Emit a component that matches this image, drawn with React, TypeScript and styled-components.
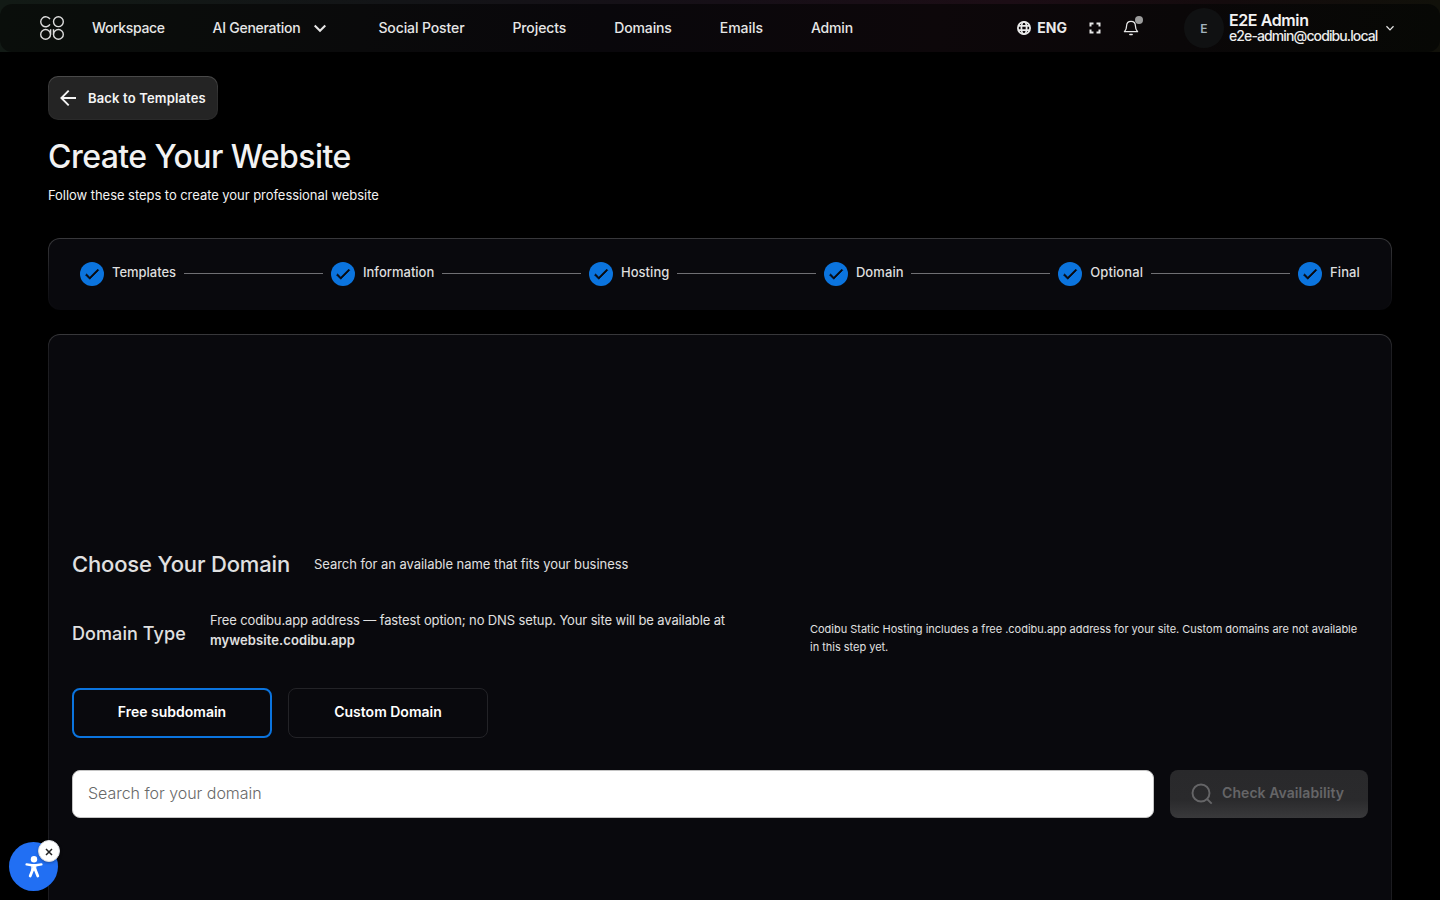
import React from 'react';
import styled, { createGlobalStyle } from 'styled-components';

const GlobalStyle = createGlobalStyle`
  *, *::before, *::after { box-sizing: border-box; }
  body {
    margin: 0;
    background: #000;
    color: #ededed;
    font-family: Inter, "Liberation Sans", sans-serif;
    overflow: hidden;
  }
  h1, h2, h3, p { margin: 0; font-weight: 400; }
  button, input { font-family: inherit; margin: 0; }
`;

interface Tracked { $track?: number }

const Page = styled.div`
  height: 900px;
  overflow: hidden;
`;

const TopStrip = styled.div`
  padding-top: 4px;
  background: linear-gradient(90deg, #121a15 0%, #131417 28%, #160f17 50%, #1c0d15 70%, #140b0d 85%, #11110a 100%);
`;

const Header = styled.header`
  height: 48px;
  padding: 0 44px 0 40px;
  display: flex;
  align-items: center;
  border-radius: 12px;
  background: linear-gradient(90deg, #0a0e0b 0%, #0a0a0b 25%, #09070b 42%, #0d070a 65%, #0a0708 82%, #070805 100%);
`;

const Nav = styled.nav`
  display: flex;
  align-items: center;
  gap: 48px;
  margin-left: 28px;
`;

const NavLink = styled.a<Tracked>`
  display: flex;
  align-items: center;
  gap: 11px;
  font-size: 14px;
  font-weight: 500;
  line-height: 20px;
  white-space: nowrap;
  color: #e6e6e6;
  letter-spacing: ${({ $track = 0 }) => $track}px;
  svg { margin-right: 1px; }
`;

const HeaderTools = styled.div`
  display: flex;
  align-items: center;
  margin-left: auto;
  color: #e8e8e8;
`;

const Language = styled.div`
  display: flex;
  align-items: center;
  gap: 6px;
  font-size: 14px;
  font-weight: 700;
  line-height: 20px;
`;

const FullscreenButton = styled.span`
  display: flex;
  margin-left: 22px;
`;

const BellButton = styled.span`
  position: relative;
  display: flex;
  margin-left: 22px;
`;

const BellDot = styled.span`
  position: absolute;
  top: -4px;
  right: -4px;
  width: 8px;
  height: 8px;
  border-radius: 50%;
  background: #9b9b9b;
`;

const Avatar = styled.span`
  width: 40px;
  height: 40px;
  margin-left: 45px;
  display: flex;
  align-items: center;
  justify-content: center;
  border-radius: 50%;
  background: #101112;
  color: #a3b3bd;
  font-size: 12px;
  font-weight: 600;
`;

const Account = styled.div`
  width: 149px;
  margin: 0 6px 0 5px;
  white-space: nowrap;
`;

const AccountName = styled.div`
  font-size: 16px;
  font-weight: 600;
  line-height: 16px;
  letter-spacing: -0.4px;
  color: #f2f2f2;
`;

const AccountMail = styled.div`
  font-size: 14px;
  font-weight: 500;
  line-height: 16px;
  letter-spacing: -0.89px;
  color: #ececec;
`;

const Main = styled.main`
  padding: 24px 48px 0;
`;

const BackButton = styled.button`
  display: flex;
  align-items: center;
  gap: 12px;
  width: 170px;
  height: 44px;
  padding: 0 0 0 11px;
  border: 1px solid transparent;
  border-radius: 10px;
  background:
    linear-gradient(#242424, #242424) padding-box,
    linear-gradient(#4a4a4a, #303030 40%, #2a2a2a) border-box;
  color: #f4f4f4;
  font-size: 13px;
  font-weight: 600;
  letter-spacing: 0.16px;
  white-space: nowrap;
`;

const Title = styled.h1`
  margin-top: 17px;
  font-size: 32px;
  font-weight: 500;
  line-height: 40px;
  letter-spacing: -0.55px;
  color: #f2f2f2;
`;

const Subtitle = styled.p`
  margin-top: 8px;
  font-size: 13px;
  line-height: 20px;
  letter-spacing: -0.05px;
  color: #f2f2f2;
`;

const Card = styled.section`
  border: 1px solid transparent;
  border-radius: 12px;
  background:
    linear-gradient(#09090d, #09090d) padding-box,
    linear-gradient(#38383b, #1d1d21 16px, #1b1b1f) border-box;
`;

const StepsCard = styled(Card)`
  height: 72px;
  margin-top: 33px;
  padding: 0 31px;
  display: flex;
  align-items: center;
  gap: 8px;
  background:
    linear-gradient(#09090d, #09090d) padding-box,
    linear-gradient(#38383b, #1d1d21 50%, #09090d) border-box;
`;

const StepBadge = styled.span`
  width: 24px;
  height: 24px;
  flex: none;
  display: flex;
  align-items: center;
  justify-content: center;
  border-radius: 50%;
  background: #0b74de;
`;

const StepLabel = styled.span<{ $width: number } & Tracked>`
  width: ${({ $width }) => $width}px;
  flex: none;
  margin-top: -4px;
  font-size: 13px;
  font-weight: 500;
  line-height: 20px;
  white-space: nowrap;
  color: #dedede;
  letter-spacing: ${({ $track = 0 }) => $track}px;
`;

const StepLine = styled.span`
  flex: 1;
  height: 1px;
  margin-top: -1px;
  background: #6f6f73;
`;

const DomainCard = styled(Card)`
  height: 640px;
  margin-top: 24px;
  padding: 214px 23px 0;
`;

const HeadingRow = styled.div`
  display: flex;
  align-items: center;
  gap: 24px;
`;

const Heading = styled.h2`
  width: 218px;
  font-size: 22px;
  font-weight: 500;
  line-height: 30px;
  letter-spacing: -0.16px;
  white-space: nowrap;
  color: #e0e0e0;
`;

const Body = styled.p<Tracked>`
  font-size: 13px;
  line-height: 20px;
  color: #e0e0e0;
  letter-spacing: ${({ $track = 0 }) => $track}px;
`;

const Address = styled.strong`
  font-weight: 600;
  letter-spacing: 0.08px;
`;

const TypeRow = styled.div`
  display: grid;
  grid-template-columns: 114px 576px 1fr;
  column-gap: 24px;
  align-items: center;
  margin-top: 25px;
`;

const TypeHeading = styled.h3`
  padding-top: 7px;
  font-size: 18px;
  font-weight: 500;
  line-height: 26px;
  letter-spacing: 0.08px;
  white-space: nowrap;
  color: #e0e0e0;
`;

const Note = styled.p`
  padding-top: 16px;
  font-size: 11px;
  line-height: 18px;
  letter-spacing: -0.02px;
  color: #e0e0e0;
`;

const ChoiceRow = styled.div`
  display: flex;
  gap: 16px;
  margin-top: 32px;
`;

const Choice = styled.button<{ $active?: boolean }>`
  width: 200px;
  height: 50px;
  padding: 0 0 3px;
  border: ${({ $active }) => ($active ? '2px solid #0b74de' : '1px solid #232327')};
  border-radius: 8px;
  background: transparent;
  color: #fff;
  font-size: 14px;
  font-weight: 600;
`;

const SearchRow = styled.div`
  display: flex;
  gap: 16px;
  margin-top: 32px;
`;

const SearchInput = styled.input`
  flex: 1;
  height: 48px;
  padding: 0 15px 2px;
  border: 1px solid #c4c4c4;
  border-radius: 8px;
  background: #fff;
  font-size: 16px;
  font-weight: 300;
  letter-spacing: -0.03px;
  &::placeholder { color: #686868; opacity: 1; }
`;

const CheckButton = styled.button`
  width: 198px;
  height: 48px;
  padding: 0 0 0 20px;
  display: flex;
  align-items: center;
  gap: 8px;
  border: 0;
  border-radius: 8px;
  background: linear-gradient(#29292b 0%, #2a2a2c 62%, #39393b 100%);
  color: #656567;
  font-size: 14px;
  font-weight: 600;
  letter-spacing: 0.07px;
  white-space: nowrap;
`;

const CheckLabel = styled.span`
  padding-bottom: 3px;
`;

const AccessibilityButton = styled.div`
  position: fixed;
  left: 9px;
  top: 842px;
  width: 49px;
  height: 49px;
  display: flex;
  align-items: center;
  justify-content: center;
  border-radius: 50%;
  background: #216ff3;
`;

const DismissBadge = styled.span`
  position: absolute;
  top: -2px;
  left: 29px;
  width: 22px;
  height: 22px;
  padding-top: 2px;
  display: flex;
  align-items: center;
  justify-content: center;
  border-radius: 50%;
  border: 1px solid #d9dbe0;
  background: #fff;
  box-shadow: 0 1px 3px rgba(0, 0, 0, 0.3);
`;

const Logo = () => (
  <svg width="24" height="24" viewBox="0 0 24 24" fill="none" stroke="#dcdcdc" strokeWidth="1.4">
    <path d="M10 3.2A5 5 0 1 0 10 8.4" />
    <circle cx="18.4" cy="5.7" r="4.9" />
    <circle cx="5.6" cy="18.4" r="4.9" />
    <path d="M10.6 13.2v5.2" />
    <circle cx="18.4" cy="18.4" r="4.9" />
    <path d="M13.5 13.2v5.2" />
  </svg>
);

const Chevron = ({ size, weight }: { size: number; weight: number }) => (
  <svg width={size} height={size} viewBox="0 0 16 16" fill="none" stroke="currentColor" strokeWidth={weight}>
    <path d="M3.3 5.7l4.7 4.7 4.7-4.7" />
  </svg>
);

const Globe = () => (
  <svg width="14" height="14" viewBox="0 0 14 14" fill="none" stroke="currentColor" strokeWidth="1.8">
    <circle cx="7" cy="7" r="6.1" />
    <ellipse cx="7" cy="7" rx="2.6" ry="6.1" />
    <path d="M1.2 4.8h11.6M1.2 9.2h11.6" />
  </svg>
);

const Fullscreen = () => (
  <svg width="12" height="12" viewBox="0 0 12 12" fill="none" stroke="currentColor" strokeWidth="2">
    <path d="M1.5 4.5v-3h3M7.5 1.5h3v3M10.5 7.5v3h-3M4.5 10.5h-3v-3" />
  </svg>
);

const Bell = () => (
  <svg width="16" height="16" viewBox="0 0 16 16" fill="none" stroke="currentColor" strokeWidth="1.25" strokeLinecap="round" strokeLinejoin="round">
    <path d="M8 1.3c-2.7 0-4.4 2-4.4 4.5 0 3.4-1 4.4-2.2 5.9h13.2c-1.2-1.5-2.2-2.5-2.2-5.9C12.4 3.3 10.7 1.3 8 1.3z" />
    <path d="M6.9 14.5h2.2" strokeWidth="1.5" />
  </svg>
);

const ArrowLeft = () => (
  <svg width="16" height="16" viewBox="0 0 16 16" fill="none" stroke="currentColor" strokeWidth="1.9">
    <path d="M16 8H1.5M8.7 0.7L1.4 8l7.3 7.3" />
  </svg>
);

const Check = () => (
  <svg width="18" height="18" viewBox="0 0 24 24" fill="#09090d" stroke="#09090d" strokeWidth="0.9">
    <path d="M9 16.17L4.83 12l-1.42 1.41L9 19 21 7l-1.41-1.41z" />
  </svg>
);

const Magnifier = () => (
  <svg width="24" height="24" viewBox="0 0 24 24" fill="none" stroke="currentColor" strokeWidth="1.9">
    <circle cx="11" cy="11" r="8.5" />
    <path d="M17 17l4.7 4.7" />
  </svg>
);

const Person = () => (
  <svg width="18" height="22" viewBox="0 0 18 22" fill="none" stroke="#fff" strokeLinecap="round" strokeLinejoin="round">
    <circle cx="9" cy="3.2" r="3.2" fill="#fff" stroke="none" />
    <path d="M1.6 8.4L7 9.2h4l5.4-.8" strokeWidth="2.4" />
    <path d="M7.2 9.5h3.6v4.5H7.2z" fill="#fff" strokeWidth="1" />
    <path d="M7.8 13.5L5.2 20M10.2 13.5l2.6 6.5" strokeWidth="2.8" />
  </svg>
);

const Cross = () => (
  <svg width="8" height="8" viewBox="0 0 8 8" fill="none" stroke="#222" strokeWidth="1.5">
    <path d="M1 1l6 6M7 1l-6 6" />
  </svg>
);

const navItems = [
  { label: 'Workspace', track: -0.36 },
  { label: 'AI Generation', track: -0.27, menu: true },
  { label: 'Social Poster', track: -0.11 },
  { label: 'Projects', track: -0.1 },
  { label: 'Domains', track: -0.13 },
  { label: 'Emails', track: -0.05 },
  { label: 'Admin', track: -0.15 },
];

const steps = [
  { label: 'Templates', width: 64, track: -0.03 },
  { label: 'Information', width: 71, track: 0 },
  { label: 'Hosting', width: 48, track: 0.05 },
  { label: 'Domain', width: 47.4, track: 0.08 },
  { label: 'Optional', width: 52.8, track: 0.1 },
  { label: 'Final', width: 30, track: 0.1 },
];

export default function App() {
  return (
    <Page>
      <GlobalStyle />
      <TopStrip>
        <Header>
          <Logo />
          <Nav>
            {navItems.map((item) => (
              <NavLink key={item.label} $track={item.track}>
                {item.label}
                {item.menu && <Chevron size={18} weight={1.8} />}
              </NavLink>
            ))}
          </Nav>
          <HeaderTools>
            <Language>
              <Globe />
              ENG
            </Language>
            <FullscreenButton>
              <Fullscreen />
            </FullscreenButton>
            <BellButton>
              <Bell />
              <BellDot />
            </BellButton>
            <Avatar>E</Avatar>
            <Account>
              <AccountName>E2E Admin</AccountName>
              <AccountMail>e2e-admin@codibu.local</AccountMail>
            </Account>
            <Chevron size={12} weight={1.6} />
          </HeaderTools>
        </Header>
      </TopStrip>
      <Main>
        <BackButton>
          <ArrowLeft />
          Back to Templates
        </BackButton>
        <Title>Create Your Website</Title>
        <Subtitle>Follow these steps to create your professional website</Subtitle>
        <StepsCard>
          {steps.map((step, index) => (
            <React.Fragment key={step.label}>
              <StepBadge>
                <Check />
              </StepBadge>
              <StepLabel $width={step.width} $track={step.track}>{step.label}</StepLabel>
              {index < steps.length - 1 && <StepLine />}
            </React.Fragment>
          ))}
        </StepsCard>
        <DomainCard>
          <HeadingRow>
            <Heading>Choose Your Domain</Heading>
            <Body $track={-0.05}>Search for an available name that fits your business</Body>
          </HeadingRow>
          <TypeRow>
            <TypeHeading>Domain Type</TypeHeading>
            <Body $track={-0.125}>
              Free codibu.app address — fastest option; no DNS setup. Your site will be available at
              <br />
              <Address>mywebsite.codibu.app</Address>
            </Body>
            <Note>
              Codibu Static Hosting includes a free .codibu.app address for your site. Custom domains are not available
              in this step yet.
            </Note>
          </TypeRow>
          <ChoiceRow>
            <Choice $active>Free subdomain</Choice>
            <Choice>Custom Domain</Choice>
          </ChoiceRow>
          <SearchRow>
            <SearchInput placeholder="Search for your domain" />
            <CheckButton>
              <Magnifier />
              <CheckLabel>Check Availability</CheckLabel>
            </CheckButton>
          </SearchRow>
        </DomainCard>
      </Main>
      <AccessibilityButton>
        <Person />
        <DismissBadge>
          <Cross />
        </DismissBadge>
      </AccessibilityButton>
    </Page>
  );
}
